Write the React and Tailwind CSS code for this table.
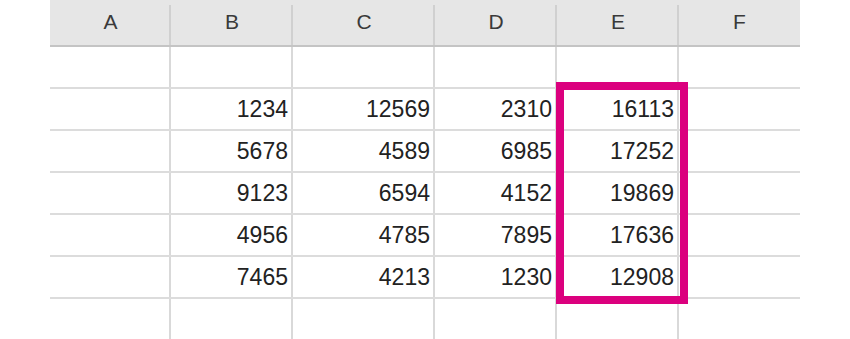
import React from "react";

const cols = ["A", "B", "C", "D", "E", "F"];
const widths = ["w-[121px]", "w-[122px]", "w-[142px]", "w-[122px]", "w-[122px]", "w-[121px]"];
const data = [
  [],
  ["", "1234", "12569", "2310", "16113", ""],
  ["", "5678", "4589", "6985", "17252", ""],
  ["", "9123", "6594", "4152", "19869", ""],
  ["", "4956", "4785", "7895", "17636", ""],
  ["", "7465", "4213", "1230", "12908", ""],
  [],
];

export default function App() {
  return (
    <div
      className="relative w-[850px] h-[339px] overflow-hidden bg-white"
      style={{ fontFamily: '"Liberation Sans", Arial, sans-serif' }}
    >
      <div className="ml-[50px] w-[750px] flex flex-col">
        <div className="flex h-[47px] bg-[#e6e6e6] border-b-2 border-[#c4c4c4]">
          {cols.map((c, i) => (
            <div key={c} className={`${widths[i]} relative flex items-center justify-center text-[21px] text-[#3a3a3a]`}>
              <span className="-mt-[2px]">{c}</span>
              {i < 5 && <div className="absolute right-0 top-[5px] bottom-0 w-[2px] bg-[#d0d0d0]" />}
            </div>
          ))}
        </div>
        {data.map((row, r) => (
          <div key={r} className="flex h-[42px] border-b-2 border-[#dcdcdc] shrink-0">
            {cols.map((c, i) => (
              <div
                key={c}
                className={`${widths[i]} flex items-center justify-end pr-[3px] text-[23px] text-[#222] ${i < 5 ? "border-r-2 border-[#d9d9d9]" : ""}`}
              >
                {row[i] || ""}
              </div>
            ))}
          </div>
        ))}
      </div>
      <div className="absolute left-[556px] top-[82px] w-[132px] h-[222px] border-[8px] border-[#db007e]" />
    </div>
  );
}
